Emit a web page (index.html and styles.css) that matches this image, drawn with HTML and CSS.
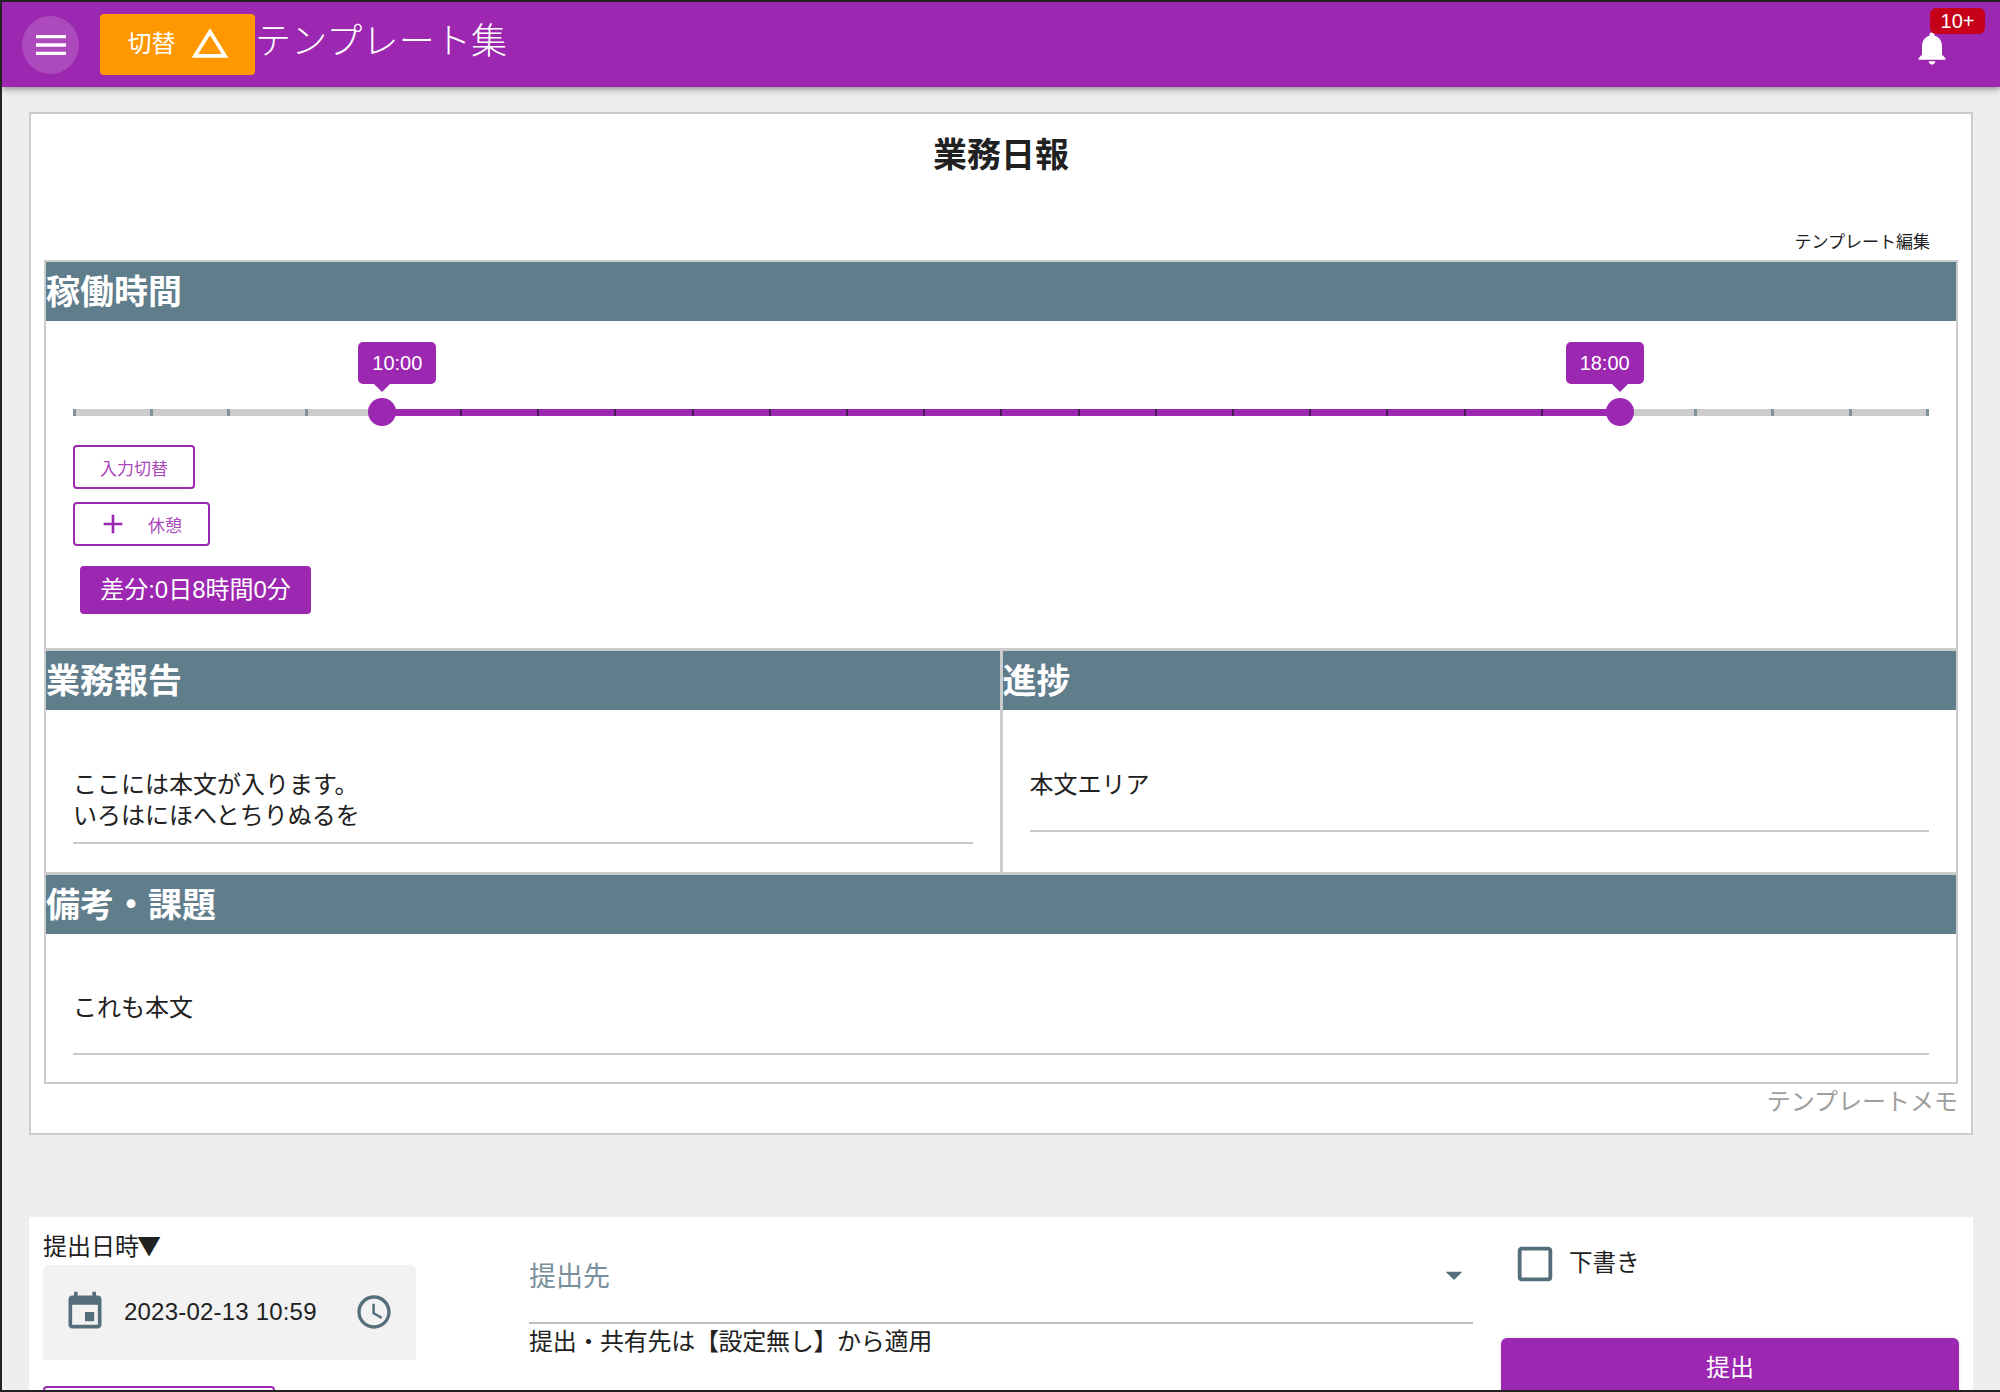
FILE: index.html
```html
<!DOCTYPE html>
<html lang="ja">
<head>
    <meta charset="UTF-8">
    <title>業務日報</title>
    <link rel="stylesheet" href="styles.css">
</head>
<body>
<div class="frame">
    <header class="appbar">
        <button class="menu-btn" type="button">
            <svg class="icon-40" viewBox="0 0 24 24"><path d="M3 18h18v-2H3v2zm0-5h18v-2H3v2zm0-7v2h18V6H3z"/></svg>
        </button>
        <button class="switch-btn" type="button">
            <span class="switch-text">切替</span>
            <svg class="icon-triangle" viewBox="0 0 24 24"><path d="M12 7.77L18.39 18H5.61L12 7.77M12 4L2 20h20L12 4z"/></svg>
        </button>
        <div class="appbar-title">テンプレート集</div>
        <div class="bell">
            <svg class="icon-40" viewBox="0 0 24 24"><path d="M12 22c1.1 0 2-.9 2-2h-4c0 1.1.89 2 2 2zm6-6v-5c0-3.07-1.64-5.64-4.5-6.32V4c0-.83-.67-1.5-1.5-1.5s-1.5.67-1.5 1.5v.68C7.63 5.36 6 7.92 6 11v5l-2 2v1h16v-1l-2-2z"/></svg>
            <span class="badge">10+</span>
        </div>
    </header>

    <main class="card">
        <h1 class="card-title">業務日報</h1>
        <div class="edit-link">テンプレート編集</div>

        <div class="report">
            <section class="section section-time">
                <h2 class="section-head">稼働時間</h2>
                <div class="time-body">
                    <div class="slider">
                        <div class="rail" id="rail"></div>
                        <div class="range" style="left:16.667%;width:66.667%"></div>
                        <div class="thumb" style="left:16.667%"><span class="thumb-label label-start">10:00</span></div>
                        <div class="thumb" style="left:83.333%"><span class="thumb-label label-end">18:00</span></div>
                    </div>
                    <button class="outline-btn btn-switch" type="button">入力切替</button>
                    <button class="outline-btn btn-break" type="button">
                        <svg class="icon-plus" viewBox="0 0 24 24"><path d="M19 13h-6v6h-2v-6H5v-2h6V5h2v6h6v2z"/></svg>
                        <span>休憩</span>
                    </button>
                    <div class="diff-chip">差分:0日8時間0分</div>
                </div>
            </section>

            <div class="section-row">
                <section class="section section-half">
                    <h2 class="section-head">業務報告</h2>
                    <div class="field field-report">ここには本文が入ります。<br>いろはにほへとちりぬるを</div>
                </section>
                <section class="section section-half section-right">
                    <h2 class="section-head">進捗</h2>
                    <div class="field field-progress">本文エリア</div>
                </section>
            </div>

            <section class="section section-note">
                <h2 class="section-head">備考・課題</h2>
                <div class="field field-note">これも本文</div>
            </section>
        </div>

        <div class="memo">テンプレートメモ</div>
    </main>

    <div class="submit-panel">
        <div class="col-date">
            <div class="date-label">提出日時<span class="date-arrow">▼</span></div>
            <div class="date-box">
                <svg class="icon-event" viewBox="0 0 24 24"><path d="M17 12h-5v5h5v-5zM16 1v2H8V1H6v2H5c-1.11 0-1.99.9-1.99 2L3 19c0 1.1.89 2 2 2h14c1.1 0 2-.9 2-2V5c0-1.1-.9-2-2-2h-1V1h-2zm3 18H5V8h14v11z"/></svg>
                <span class="date-text">2023-02-13 10:59</span>
                <svg class="icon-40" viewBox="0 0 24 24"><path d="M11.99 2C6.47 2 2 6.48 2 12s4.47 10 9.99 10C17.52 22 22 17.52 22 12S17.52 2 11.99 2zM12 20c-4.42 0-8-3.58-8-8s3.58-8 8-8 8 3.58 8 8-3.58 8-8 8zM12.5 7H11v6l5.25 3.15.75-1.23-4.5-2.67z"/></svg>
            </div>
            <button class="outline-btn btn-cut" type="button"></button>
        </div>
        <div class="col-dest">
            <div class="dest-select">
                <span>提出先</span>
                <svg class="icon-40" viewBox="0 0 24 24"><path d="M7 10l5 5 5-5z"/></svg>
            </div>
            <div class="dest-note">提出・共有先は【設定無し】から適用</div>
        </div>
        <div class="col-action">
            <label class="draft">
                <svg class="icon-check" viewBox="0 0 24 24"><path d="M19 5v14H5V5h14m0-2H5c-1.1 0-2 .9-2 2v14c0 1.1.9 2 2 2h14c1.1 0 2-.9 2-2V5c0-1.1-.9-2-2-2z"/></svg>
                <span class="draft-text">下書き</span>
            </label>
            <button class="submit-btn" type="button">提出</button>
        </div>
    </div>
</div>

<script>
    // 30 min steps from 8:00 to 20:00
    const rail = document.getElementById('rail');
    for (let i = 0; i <= 24; i++) {
        const tick = document.createElement('span');
        tick.classList.add('tick');
        if (i > 4 && i < 20) tick.classList.add('tick-on');
        rail.appendChild(tick);
    }
</script>
</body>
</html>
```

FILE: styles.css
```css
html, body {
    margin: 0;
    height: 100%;
    overflow: hidden;
}
body {
    font-family: "Liberation Sans", "Noto Sans CJK JP", sans-serif;
    color: #212121;
    background: #eeeeee;
}
button {
    font-family: inherit;
    padding: 0;
    border: none;
}
.frame {
    height: 1392px;
    box-sizing: border-box;
    border-top: 2px solid #222;
    border-left: 2px solid #222;
    border-bottom: 2px solid #222;
    overflow: hidden;
    background: #eeeeee;
}
.icon-40 {
    width: 40px;
    height: 40px;
    flex: none;
    display: block;
    fill: currentColor;
}

/* app bar */
.appbar {
    display: flex;
    align-items: center;
    height: 85px;
    padding-left: 20px;
    background: #9c27b0;
    color: #fff;
    box-shadow: 0 2px 4px -1px rgba(0,0,0,0.2), 0 4px 5px 0 rgba(0,0,0,0.14), 0 1px 10px 0 rgba(0,0,0,0.12);
    position: relative;
}
.menu-btn {
    width: 57px;
    height: 58px;
    border-radius: 50%;
    background: rgba(255,255,255,0.16);
    color: #fff;
    display: flex;
    align-items: center;
    justify-content: center;
}
.switch-btn {
    width: 155px;
    height: 61px;
    margin-left: 21px;
    margin-top: -1px;
    border-radius: 4px;
    background: #ff9800;
    color: #fff;
    font-size: 24px;
    display: flex;
    align-items: center;
    justify-content: center;
    gap: 12px;
}
.switch-text {
    margin-left: 4px;
    padding-bottom: 5px;
}
.icon-triangle {
    width: 44px;
    height: 44px;
    margin-top: -2px;
    fill: #fff;
}
.appbar-title {
    margin-left: 0;
    margin-top: -14px;
    font-size: 36px;
    font-weight: 300;
    letter-spacing: 0.2px;
}
.bell {
    margin-left: auto;
    margin-right: 48px;
    margin-top: 6px;
    position: relative;
}
.badge {
    position: absolute;
    left: 18px;
    top: -20px;
    width: 55px;
    height: 26px;
    border-radius: 6px;
    background: #c50018;
    font-size: 20px;
    line-height: 26px;
    text-align: center;
}

/* template card */
.card {
    width: 1944px;
    height: 1023px;
    box-sizing: border-box;
    margin: 25px 0 0 27px;
    padding: 0 13px;
    border: 2px solid #cccccc;
    background: #fff;
}
.card-title {
    margin: 17px 0 0;
    font-size: 34px;
    line-height: 48px;
    font-weight: 700;
    text-align: center;
}
.edit-link {
    margin-top: 51px;
    padding-right: 28px;
    font-size: 17px;
    line-height: 26px;
    text-align: right;
}
.report {
    margin-top: 4px;
    border: 2px solid #cccccc;
    height: 824px;
    box-sizing: border-box;
}
.section-head {
    margin: 0;
    height: 59px;
    background: #607d8b;
    color: #fff;
    font-size: 34px;
    line-height: 60px;
    font-weight: 700;
}

/* working time */
.section-time {
    height: 389px;
    box-sizing: border-box;
    border-bottom: 3px solid #cccccc;
}
.time-body {
    padding: 0 27px;
}
.slider {
    position: relative;
    height: 7px;
    margin-top: 88px;
}
.rail {
    height: 7px;
    border-radius: 4px;
    background: #cccccc;
    display: flex;
    justify-content: space-between;
}
.tick {
    position: relative;
    z-index: 1;
    box-sizing: border-box;
    width: 3px;
    height: 7px;
    background: #7f939c;
}
.tick-on {
    padding-left: 1px;
    background: #4a1a55;
    background-clip: content-box;
}
.range {
    position: absolute;
    top: 0;
    height: 7px;
    background: #9c27b0;
}
.thumb {
    position: absolute;
    z-index: 2;
    top: -11px;
    width: 28px;
    height: 28px;
    margin-left: -14px;
    border-radius: 50%;
    background: #9c27b0;
}
.thumb-label {
    position: absolute;
    top: -56px;
    left: -10px;
    width: 78px;
    height: 42px;
    border-radius: 5px;
    background: #9c27b0;
    color: #fff;
    font-size: 20px;
    line-height: 43px;
    text-align: center;
}
.label-end {
    left: -40px;
}
.thumb-label::after {
    content: "";
    position: absolute;
    top: 42px;
    left: 16px;
    border-left: 8px solid transparent;
    border-right: 8px solid transparent;
    border-top: 8px solid #9c27b0;
}
.label-end::after {
    left: 46px;
}
.outline-btn {
    display: flex;
    align-items: center;
    justify-content: center;
    box-sizing: border-box;
    border: 2px solid #9c27b0;
    border-radius: 4px;
    background: #fff;
    color: #ab47bc;
    font-size: 17px;
}
.btn-switch {
    width: 122px;
    height: 44px;
    margin-top: 29px;
}
.btn-break {
    width: 137px;
    height: 44px;
    margin-top: 13px;
    gap: 19px;
}
.icon-plus {
    width: 32px;
    height: 32px;
    fill: #9c27b0;
    margin-left: -4px;
}
.diff-chip {
    width: 231px;
    height: 48px;
    margin: 20px 0 0 7px;
    border-radius: 4px;
    background: #9c27b0;
    color: #fff;
    font-size: 24px;
    line-height: 48px;
    text-align: center;
}

/* text fields */
.section-row {
    display: flex;
    height: 221px;
    border-bottom: 3px solid #cccccc;
}
.section-half {
    flex: 1;
}
.section-right {
    border-left: 3px solid #cccccc;
}
.field {
    font-size: 24px;
    line-height: 31px;
    border-bottom: 2px solid #c8c8c8;
}
.field-report {
    margin: 59px 27px 0 27px;
    padding-bottom: 11px;
}
.field-progress {
    margin: 59px 27px 0 27px;
    padding-bottom: 30px;
}
.field-note {
    margin: 58px 27px 0 27px;
    padding-bottom: 30px;
}

.memo {
    margin-top: 1px;
    color: #9e9e9e;
    font-size: 24px;
    line-height: 34px;
    text-align: right;
}

/* submit panel */
.submit-panel {
    display: flex;
    width: 1944px;
    height: 200px;
    margin: 82px 0 0 27px;
    padding-left: 14px;
    box-sizing: border-box;
    background: #fff;
}
.col-date {
    width: 373px;
}
.date-label {
    height: 36px;
    margin-top: 12px;
    font-size: 24px;
    line-height: 35px;
}
.date-arrow {
    font-family: "Noto Sans CJK JP", sans-serif;
    line-height: 1;
    margin-left: -2px;
}
.date-box {
    display: flex;
    align-items: center;
    box-sizing: border-box;
    height: 95px;
    padding: 0 22px 2px 20px;
    border-radius: 6px 6px 0 0;
    background: #f2f2f2;
    color: #546e7a;
}
.icon-event {
    width: 44px;
    height: 44px;
    flex: none;
    fill: currentColor;
}
.date-text {
    margin-left: 17px;
    margin-right: auto;
    color: #212121;
    font-size: 24px;
    letter-spacing: 0.2px;
}
.btn-cut {
    width: 232px;
    height: 40px;
    margin-top: 26px;
}
.col-dest {
    width: 944px;
    margin-left: 113px;
}
.dest-select {
    display: flex;
    align-items: center;
    justify-content: space-between;
    height: 107px;
    padding-top: 10px;
    box-sizing: border-box;
    border-bottom: 2px solid #bdbdbd;
    color: #78909c;
    font-size: 27px;
}
.dest-select .icon-40 {
    margin-right: -1px;
    color: #546e7a;
}
.dest-note {
    font-size: 24px;
    line-height: 36px;
    letter-spacing: -0.3px;
}
.col-action {
    width: 458px;
    margin-left: 28px;
}
.draft {
    display: flex;
    align-items: center;
    gap: 11px;
    margin: 24px 0 0 11px;
    font-size: 23.5px;
}
.draft-text {
    padding-bottom: 6px;
}
.icon-check {
    width: 46px;
    height: 46px;
    fill: #546e7a;
}
.submit-btn {
    display: block;
    width: 458px;
    height: 54px;
    margin-top: 51px;
    border-radius: 6px 6px 0 0;
    background: #9c27b0;
    color: #fff;
    font-size: 24px;
    box-shadow: 0 0 4px rgba(0,0,0,0.12);
}
```
